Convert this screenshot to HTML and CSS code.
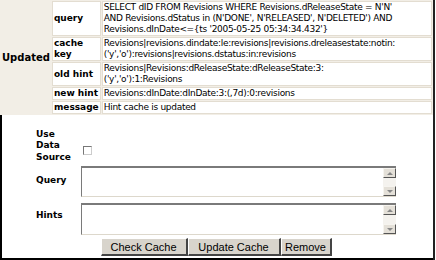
FILE: index.html
```html
<!DOCTYPE html>
<html lang="en">
<head>
    <meta charset="UTF-8">
    <title>Hint Cache</title>
    <link rel="stylesheet" href="styles.css">
</head>
<body>
    <div class="page">
        <!-- result of the last cache action -->
        <table class="result">
            <tr>
                <th class="status" rowspan="5">Updated</th>
                <th class="key">query</th>
                <td class="val">SELECT dID FROM Revisions WHERE Revisions.dReleaseState = N'N'<br>AND Revisions.dStatus in (N'DONE', N'RELEASED', N'DELETED') AND<br>Revisions.dInDate&lt;={ts '2005-05-25 05:34:34.432'}</td>
            </tr>
            <tr>
                <th class="key">cache<br>key</th>
                <td class="val">Revisions|revisions.dindate:le:revisions|revisions.dreleasestate:notin:<br>('y','o'):revisions|revisions.dstatus:in:revisions</td>
            </tr>
            <tr>
                <th class="key">old hint</th>
                <td class="val">Revisions|Revisions:dReleaseState:dReleaseState:3:<br>('y','o'):1:Revisions</td>
            </tr>
            <tr>
                <th class="key">new hint</th>
                <td class="val">Revisions:dInDate:dInDate:3:(,7d):0:revisions</td>
            </tr>
            <tr>
                <th class="key">message</th>
                <td class="val">Hint cache is updated</td>
            </tr>
        </table>

        <!-- form -->
        <div class="panel">
            <table class="form">
                <tr class="row-check">
                    <th>Use Data Source</th>
                    <td><span class="check"></span></td>
                </tr>
                <tr class="row-query">
                    <th>Query</th>
                    <td>
                        <div class="textbox">
                            <div class="text"></div>
                            <div class="scroll">
                                <span class="arrow up"></span>
                                <span class="track"></span>
                                <span class="arrow down"></span>
                            </div>
                        </div>
                    </td>
                </tr>
                <tr class="row-hints">
                    <th>Hints</th>
                    <td>
                        <div class="textbox tall">
                            <div class="text"></div>
                            <div class="scroll">
                                <span class="arrow up"></span>
                                <span class="track"></span>
                                <span class="arrow down"></span>
                            </div>
                        </div>
                    </td>
                </tr>
                <tr>
                    <td colspan="2" class="buttons">
                        <button class="btn check-btn">Check Cache</button><button class="btn update-btn">Update Cache</button><button class="btn remove-btn">Remove</button>
                    </td>
                </tr>
            </table>
        </div>
    </div>
</body>
</html>
```

FILE: styles.css
```css
/* page */
body {
    margin: 0;
    background: #fff;
    font-family: "DejaVu Sans", Verdana, sans-serif;
    font-size: 9px;
    color: #000;
}

.page {
    width: 435px;
    height: 260px;
    box-sizing: border-box;
    border-right: 2px solid #222;
    display: flex;
    flex-direction: column;
}

/* result table */
.result {
    width: 433px;
    border-collapse: separate;
    border-spacing: 1px;
    background: #f2eee6;
    line-height: 11px;
}

.result th,
.result td {
    padding: 0 1px;
    text-align: left;
    white-space: nowrap;
}

.result .status {
    width: 47px;
    vertical-align: middle;
    font-size: 10px;
}

.result .key,
.result .val {
    background: #fff;
    border: 1px solid #e3ddd1;
    vertical-align: middle;
}

.result .key {
    width: 42px;
}

.result .val {
    letter-spacing: -0.3px;
}

/* form panel */
.panel {
    flex: 1;
    border-left: 2px solid #000;
    border-bottom: 2px solid #000;
    padding: 12px 0 0 34px;
}

.form {
    border-collapse: collapse;
}

.form th {
    width: 45px;
    padding: 0;
    text-align: left;
    line-height: 11.5px;
    vertical-align: middle;
}

.form td {
    padding: 0;
}

.row-check th {
    height: 38px;
}

.check {
    display: block;
    width: 7px;
    height: 7px;
    margin: 8px 0 0 2px;
    border: 1px solid #777;
    border-right-color: #ccc;
    border-bottom-color: #ccc;
    background: #fff;
}

.row-query td {
    padding-top: 1px;
}

.row-hints td {
    padding-top: 6px;
}

/* fake textarea with a classic scrollbar */
.textbox {
    display: flex;
    width: 315px;
    height: 31px;
    box-sizing: border-box;
    border: 2px solid #7a7a7a;
    border-right: 0;
    border-bottom: 1px solid #ddd8cc;
    border-left-width: 1px;
    background: #fff;
}

.textbox.tall {
    height: 32px;
}

.textbox .text {
    flex: 1;
}

.scroll {
    width: 13px;
    display: flex;
    flex-direction: column;
}

.arrow {
    height: 10px;
    box-sizing: border-box;
    background: #e4e0d8;
    border: 1px solid #f6f4ef;
    border-right-color: #555;
    border-bottom-color: #555;
    position: relative;
}

.arrow::after {
    content: "";
    position: absolute;
    left: 3px;
    top: 3px;
    border-left: 3px solid transparent;
    border-right: 3px solid transparent;
}

.arrow.up::after {
    border-bottom: 3px solid #888;
}

.arrow.down::after {
    border-top: 3px solid #888;
}

.track {
    flex: 1;
    background: #f4f2ee;
}

/* buttons */
.buttons {
    text-align: center;
    padding-top: 3px !important;
}

.btn {
    height: 18px;
    margin: 0;
    padding: 0;
    background: #d8d4cc;
    border: 1px solid #fff;
    border-right: 2px solid #444;
    border-bottom: 2px solid #444;
    font-family: "Liberation Sans", Arial, sans-serif;
    font-size: 11px;
    color: #000;
}

.check-btn {
    width: 87px;
}

.update-btn {
    width: 93px;
}

.remove-btn {
    width: 51px;
}
```
